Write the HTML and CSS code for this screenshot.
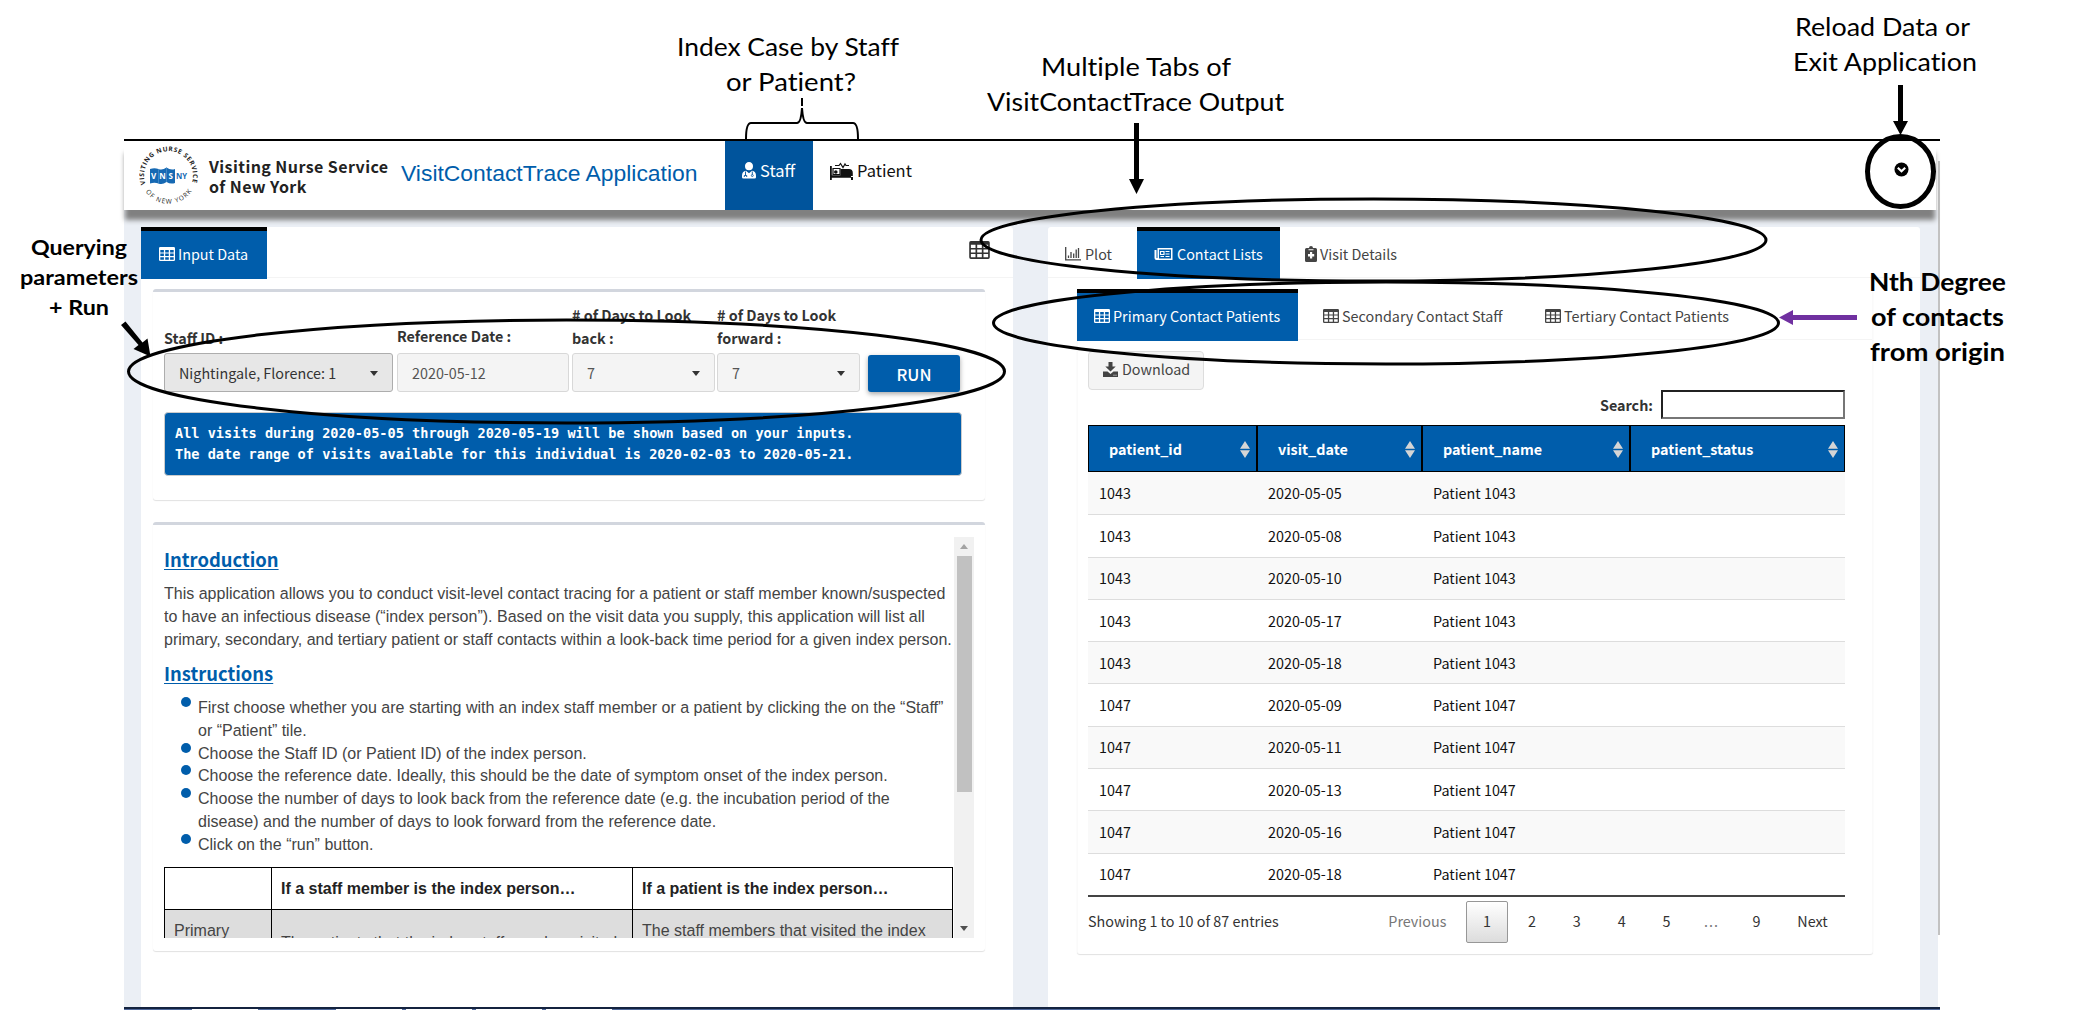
FILE: index.html
```html
<!DOCTYPE html>
<html lang="en">
<head>
<meta charset="utf-8">
<title>VisitContactTrace Application</title>
<link rel="stylesheet" href="styles.css">
</head>
<body>
<svg class="defs" width="0" height="0">
  <symbol id="table" viewBox="0 0 16 14"><path fill-rule="evenodd" fill="currentColor" d="M1.300 0h13.400q1.300 0 1.300 1.300v11.400q0 1.300-1.300 1.300h-13.400q-1.300 0-1.300-1.300v-11.400q0-1.300 1.300-1.300zM1.300 3v2.400h3.600v-2.400zM6.200 3v2.400h3.600v-2.400zM11.100 3v2.400h3.600v-2.400zM1.300 6.600v2.400h3.600v-2.400zM6.200 6.600v2.400h3.600v-2.400zM11.100 6.600v2.400h3.600v-2.400zM1.300 10.200v2.500h3.600v-2.500zM6.200 10.200v2.500h3.600v-2.500zM11.100 10.200v2.500h3.600v-2.500z"/></symbol>
</svg>
<div class="page">
  <div class="app">
    <header class="navbar">
      <svg class="logo" viewBox="0 0 60 60" width="60" height="60">
        <path id="ring" fill="none" d="M6.500 38.100A24.500 24.500 0 1 1 52.500 38.100"/>
        <path id="ringlow" fill="none" d="M4.500 42.300A28 28 0 0 0 54.500 42.300"/>
        <text class="ringtext"><textPath href="#ring" textLength="92">VISITING NURSE SERVICE</textPath></text>
        <text class="ringtext light"><textPath href="#ringlow" startOffset="4" textLength="54">OF NEW YORK</textPath></text>
        <path fill="#1669b3" d="M11 23q4.500-1.500 8.500 0q4 1.500 8-1.500q4 3 8.500 1.500v14q-4.500 1.500-8.500-1q-4 3-8 1.500q-4-1.500-8.500 0z"/>
        <path stroke="#5c9ad0" stroke-width=".6" fill="none" d="M19.500 23v14.500M27.500 21.500v14.500"/>
        <text class="logo-white" x="12" y="33" textLength="22">VNS</text>
        <text class="logo-blue" x="37" y="32.500" textLength="11" lengthAdjust="spacingAndGlyphs">NY</text>
      </svg>
      <div class="org">Visiting Nurse Service<br>of New York</div>
      <div class="title">VisitContactTrace Application</div>
      <nav class="menu">
        <a class="menu-item active"><svg width="14" height="17" viewBox="0 0 14 17"><path fill="currentColor" d="M7 0a4 4 0 0 1 4 4.200a4 4 0 0 1-8 0A4 4 0 0 1 7 0zM4 8.700l3 2.500 3-2.500q4 .7 4 5v1.500q0 1.300-1.500 1.300h-11Q0 16.500 0 15.200v-1.500q0-4.300 4-5z"/><path fill="none" stroke="#00549c" stroke-width=".9" d="M3.500 9.500v4M2.300 15v-1.500h2.400V15M10.300 9.500v3"/><circle cx="10.300" cy="13.500" r="1" fill="none" stroke="#00549c" stroke-width=".8"/></svg>Staff</a>
        <a class="menu-item"><svg width="23" height="18" viewBox="0 0 23 18"><path fill="currentColor" d="M0 4h1.800v9.200H21V15h2v3h-2v-2.200H1.800V18H0zM10.500 7h8.500q3.800 0 3.800 4v3H10.500z"/><circle cx="5.800" cy="10" r="1.800" fill="currentColor"/><path fill="none" stroke="currentColor" stroke-width="1.200" d="M5 3.500h4l1.500-2 2.500 4 2-3.500 1 1.500h3M3 6.500h7v6H3z"/></svg>Patient</a>
      </nav>
      <svg class="toggle" width="15" height="15" viewBox="0 0 15 15"><circle cx="7.500" cy="7.500" r="7"/><path fill="none" stroke="#fff" stroke-width="2.200" d="M3.800 5.800l3.700 3.500 3.700-3.500"/></svg>
    </header>

    <main class="columns">
      <section class="panel">
        <div class="tabs">
          <a class="tab active input-tab"><svg class="ico"><use href="#table"/></svg>Input Data</a>
          <svg class="ico-big"><use href="#table"/></svg>
        </div>
        <div class="box query">
          <div class="form">
            <div class="field staff"><label>Staff ID :</label><div class="control dark">Nightingale, Florence: 1<i class="caret"></i></div></div>
            <div class="field date"><label>Reference Date :</label><div class="control">2020-05-12</div></div>
            <div class="field days"><label># of Days to Look back :</label><div class="control">7<i class="caret"></i></div></div>
            <div class="field days"><label># of Days to Look forward :</label><div class="control">7<i class="caret"></i></div></div>
            <button class="run">RUN</button>
          </div>
          <pre class="notice">All visits during 2020-05-05 through 2020-05-19 will be shown based on your inputs.
The date range of visits available for this individual is 2020-02-03 to 2020-05-21.</pre>
        </div>
        <div class="box guide">
          <div class="scroller">
            <div class="copy">
              <h4>Introduction</h4>
              <p>This application allows you to conduct visit-level contact tracing for a patient or staff member known/suspected<br>to have an infectious disease (“index person”). Based on the visit data you supply, this application will list all<br>primary, secondary, and tertiary patient or staff contacts within a look-back time period for a given index person.</p>
              <h4>Instructions</h4>
              <ul>
                <li>First choose whether you are starting with an index staff member or a patient by clicking the on the “Staff”<br>or “Patient” tile.</li>
                <li>Choose the Staff ID (or Patient ID) of the index person.</li>
                <li>Choose the reference date. Ideally, this should be the date of symptom onset of the index person.</li>
                <li>Choose the number of days to look back from the reference date (e.g. the incubation period of the<br>disease) and the number of days to look forward from the reference date.</li>
                <li>Click on the “run” button.</li>
              </ul>
              <table class="matrix">
                <tr><th></th><th>If a staff member is the index person…</th><th>If a patient is the index person…</th></tr>
                <tr class="shade"><td>Primary<br>Contacts</td><td>The patients that the index staff member visited.</td><td>The staff members that visited the index<br>patient.</td></tr>
              </table>
            </div>
            <div class="bar"><i class="up"></i><i class="thumb"></i><i class="down"></i></div>
          </div>
        </div>
      </section>

      <section class="panel">
        <div class="tabs">
          <a class="tab plot"><svg class="ico" viewBox="0 0 16 14"><path fill="none" stroke="currentColor" stroke-width="1.300" d="M.7 0v12.800H16M3.500 11V8.500M6 11V5M8.700 11V6.500M11.200 11V2.500M13.500 11V1"/></svg>Plot</a>
          <a class="tab active lists"><svg class="ico wide" viewBox="0 0 18 14"><path fill-rule="evenodd" fill="currentColor" d="M3 1h15v12H2q-2 0-2-2V3h2v8h1zM4.500 2.500v9h12v-9z"/><path fill="none" stroke="currentColor" stroke-width="1.200" d="M6 4.500h3.500v3H6zM11 4.500h4M11 7h4M6 9.500h3.500M11 9.500h4"/></svg>Contact Lists</a>
          <a class="tab visits"><svg class="ico clip" viewBox="0 0 12 16"><path fill="currentColor" fill-rule="evenodd" d="M1.500 2H4a2 2 0 0 1 4 0h2.500q1.500 0 1.500 1.500v11q0 1.500-1.500 1.500h-9Q0 16 0 14.500v-11Q0 2 1.500 2zM5 6v2H3v2.400h2v2h2.200v-2h2V8h-2V6zM3.500 3.200v1h5v-1z"/></svg>Visit Details</a>
        </div>
        <div class="box results">
          <div class="tabs subtabs">
            <a class="tab active primary"><svg class="ico"><use href="#table"/></svg>Primary Contact Patients</a>
            <a class="tab secondary"><svg class="ico"><use href="#table"/></svg>Secondary Contact Staff</a>
            <a class="tab tertiary"><svg class="ico"><use href="#table"/></svg>Tertiary Contact Patients</a>
          </div>
          <div class="content">
            <button class="download"><svg width="15" height="15" viewBox="0 0 15 15"><path fill="currentColor" d="M5.500 0h4v4.500h3.200L7.500 9.500 2.300 4.500h3.200zM0 9.500h4.500l3 2.500 3-2.500H15V15H0z"/><path stroke="#f4f4f4" d="M10.500 13.200h1M12.500 13.200h1"/></svg>Download</button>
            <div class="search"><b>Search:</b><input type="text"></div>
            <table class="grid">
              <colgroup><col class="c1"><col class="c2"><col class="c3"><col class="c4"></colgroup>
              <thead><tr><th>patient_id<i></i></th><th>visit_date<i></i></th><th>patient_name<i></i></th><th>patient_status<i></i></th></tr></thead>
              <tbody>
                <tr><td>1043</td><td>2020-05-05</td><td>Patient 1043</td><td></td></tr>
                <tr><td>1043</td><td>2020-05-08</td><td>Patient 1043</td><td></td></tr>
                <tr><td>1043</td><td>2020-05-10</td><td>Patient 1043</td><td></td></tr>
                <tr><td>1043</td><td>2020-05-17</td><td>Patient 1043</td><td></td></tr>
                <tr><td>1043</td><td>2020-05-18</td><td>Patient 1043</td><td></td></tr>
                <tr><td>1047</td><td>2020-05-09</td><td>Patient 1047</td><td></td></tr>
                <tr><td>1047</td><td>2020-05-11</td><td>Patient 1047</td><td></td></tr>
                <tr><td>1047</td><td>2020-05-13</td><td>Patient 1047</td><td></td></tr>
                <tr><td>1047</td><td>2020-05-16</td><td>Patient 1047</td><td></td></tr>
                <tr><td>1047</td><td>2020-05-18</td><td>Patient 1047</td><td></td></tr>
              </tbody>
            </table>
            <div class="footer">
              <span class="info">Showing 1 to 10 of 87 entries</span>
              <span class="pages"><a class="prev">Previous</a><a class="current">1</a><a>2</a><a>3</a><a>4</a><a>5</a><a class="prev dots">...</a><a>9</a><a class="next">Next</a></span>
            </div>
          </div>
        </div>
      </section>
    </main>
    <div class="taskbar"><i></i><i></i><i></i><i></i><i></i></div>
  </div>

  <svg class="notes" width="2089" height="1010" viewBox="0 0 2089 1010">
    <g fill="none" stroke="#000" stroke-width="3">
      <ellipse cx="566.500" cy="371.500" rx="438" ry="51.500"/>
      <ellipse cx="1373.500" cy="240" rx="392.500" ry="41"/>
      <ellipse cx="1386" cy="323" rx="392.500" ry="41"/>
      <ellipse cx="1900.500" cy="171.500" rx="33" ry="35" stroke-width="5"/>
      <path stroke-width="2" d="M746 139q0-16 5-16h46q4 0 5-15q1 15 5 15h46q5 0 5 16M802 98v8M802 108v4"/>
    </g>
    <path d="M1134 123h5v56h5l-7.500 15-7.500-15h5zM1898 85h5v36h5l-7.500 14-7.500-14h5z"/>
    <path d="M121 325l4.500-3.500 17 21 5-4 3 18-17-7.500 5-4z"/>
    <path fill="#7030a0" d="M1857 315v5h-64v5l-14-7.500 14-7.500v5z"/>
    <g class="regular">
      <text x="677" y="56" textLength="222" lengthAdjust="spacingAndGlyphs">Index Case by Staff</text>
      <text x="726" y="91" textLength="130" lengthAdjust="spacingAndGlyphs">or Patient?</text>
      <text x="1041" y="76" textLength="190" lengthAdjust="spacingAndGlyphs">Multiple Tabs of</text>
      <text x="987" y="111" textLength="297" lengthAdjust="spacingAndGlyphs">VisitContactTrace Output</text>
      <text x="1795" y="36" textLength="175" lengthAdjust="spacingAndGlyphs">Reload Data or</text>
      <text x="1793" y="71" textLength="184" lengthAdjust="spacingAndGlyphs">Exit Application</text>
    </g>
    <g class="strong">
      <text x="1869" y="291" textLength="137" lengthAdjust="spacingAndGlyphs">Nth Degree</text>
      <text x="1871" y="326" textLength="133" lengthAdjust="spacingAndGlyphs">of contacts</text>
      <text x="1870" y="361" textLength="135" lengthAdjust="spacingAndGlyphs">from origin</text>
    </g>
    <g class="strong small">
      <text x="31" y="255" textLength="96" lengthAdjust="spacingAndGlyphs">Querying</text>
      <text x="20" y="285" textLength="118" lengthAdjust="spacingAndGlyphs">parameters</text>
      <text x="49" y="315" textLength="60" lengthAdjust="spacingAndGlyphs">+ Run</text>
    </g>
  </svg>
</div>
</body>
</html>
```
FILE: styles.css
```css
* { box-sizing: border-box; }
body { margin: 0; background: #fff; color: #333; font: 14.35px/20px "Noto Sans CJK SC", "Open Sans", sans-serif; }
.defs { position: absolute; }
.page { position: relative; width: 2089px; height: 1010px; overflow: hidden; padding: 139px 0 0 124px; }
.app { width: 1816px; height: 871px; border-top: 2px solid #000; display: flex; flex-direction: column; background: linear-gradient(#c2c2c2, #c2c2c2) right 0 top 20px / 2px 774px no-repeat; }

.navbar { position: relative; z-index: 1; width: 1812px; height: 69px; background: #fff; display: flex; box-shadow: 0 11px 5px -1px #808080; }
.logo { margin: 5px 0 0 15px; flex: none; }
.ringtext { font: bold 6.500px "Open Sans", sans-serif; fill: #222; }
.ringtext.light { font-weight: normal; font-size: 6.500px; }
.logo-white { font: bold 8px "Open Sans", sans-serif; fill: #fff; }
.logo-blue { font: bold 8px "Open Sans", sans-serif; fill: #1669b3; }
.org { width: 192px; margin: 15px 0 0 10px; flex: none; font-size: 16px; font-weight: 700; line-height: 20px; color: #222; letter-spacing: .42px; white-space: nowrap; }
.title { width: 324px; margin-top: 19px; flex: none; font: 22.9px/26px "Liberation Sans", Arial, sans-serif; color: #005dab; white-space: nowrap; }
.menu { display: flex; }
.menu-item { display: flex; height: 69px; padding: 17px 17px 0; gap: 4px; font-size: 16.500px; line-height: 24px; color: #111; white-space: nowrap; }
.menu-item svg { margin-top: 4px; flex: none; }
.menu-item.active { width: 88px; background: #00549c; color: #fff; }
.toggle { margin: 21px 27.500px 0 auto; }

.columns { display: flex; gap: 35px; width: 1814px; height: 865px; padding: 17px 19px 0 17px; background: #ebeff5; }
.panel { flex: none; width: 872px; height: 780px; background: #fff; border-radius: 3px 3px 0 0; }
.tabs { display: flex; height: 51px; border-bottom: 1px solid #f4f4f4; }
.tab { height: 52px; border-top: 4px solid transparent; padding: 13px 0 0 17px; line-height: 20px; white-space: nowrap; color: #444; display: flex; gap: 3px; }
.tab.active { background: #005dab; border-top-color: #000; color: #fff; }
.ico { width: 16px; height: 14px; margin-top: 3px; flex: none; }
.ico.wide { width: 19px; margin-right: 1px; }
.ico.clip { width: 12px; height: 16px; margin-top: 2px; }
.ico-big { width: 21px; height: 18px; margin: 14px 23px 0 auto; color: #333; }
.input-tab { width: 126px; padding-left: 18px; }
.plot { width: 89px; }
.plot .ico { margin-right: 1px; }
.lists { width: 143px; }
.visits { padding-left: 25px; }
.primary { width: 221px; letter-spacing: .04px; }
.secondary { width: 222px; padding-left: 25px; }
.tertiary { padding-left: 25px; }

.box { border-radius: 3px; border-top: 3px solid #d2d6de; box-shadow: 0 1px 1px rgba(0,0,0,.12); background: #fff; }
.query { width: 832px; height: 211px; margin: 11px 0 0 12px; padding: 12px 11px 0; }
.form { display: flex; align-items: flex-end; height: 88px; }
.field { display: flex; flex-direction: column; }
.field label { font-weight: 600; line-height: 23px; color: #333; margin-bottom: 4px; }
.field.staff { width: 229px; margin-right: 4px; }
.field.date { width: 172px; margin-right: 3px; }
.date label { margin-bottom: 6px; }
.field.days { width: 143px; margin-right: 2px; }
.days label { width: 130px; }
.control { height: 39px; border: 1px solid #d8d8d8; border-radius: 3px; background: #f4f4f4; color: #555; padding: 0 14px; line-height: 37px; display: flex; justify-content: space-between; }
.control.dark { background: #e7e7e7; border-color: #adadad; color: #333; }
.caret { width: 0; height: 0; margin-top: 17px; border: 4.500px solid transparent; border-top: 5px solid #333; }
.run { width: 92px; height: 37px; margin-left: 6px; border: 0; border-radius: 3px; background: #005dab; color: #fff; font: 500 16.500px/36px "Noto Sans CJK SC", sans-serif; box-shadow: 0 2px 5px rgba(0,0,0,.35); padding: 0; }
.notice { margin: 20px 0 0; width: 798px; height: 64px; padding: 10px 10px; background: #005dab; border: 1px solid #ccc; border-radius: 4px; color: #fff; font: bold 13.580px/21px "DejaVu Sans Mono", monospace; }
.guide { width: 832px; height: 429px; margin: 22px 0 0 12px; padding: 12px 11px; }
.scroller { height: 401px; overflow: hidden; display: flex; }
.copy { width: 790px; flex: none; font: 16.030px/22.900px "Liberation Sans", Arial, sans-serif; color: #444; }
.copy h4 { margin: 11px 0 11px; font: 700 18.400px/23px "Noto Sans CJK SC", sans-serif; color: #005dab; text-decoration: underline; text-decoration-thickness: 1px; text-underline-offset: 2px; }
.copy p { margin: 0; white-space: nowrap; }
.copy ul { list-style: none; margin: 0 0 11px; padding: 0 0 0 34px; }
.copy li { position: relative; white-space: nowrap; }
.copy li::before { content: ""; position: absolute; left: -17px; top: 1px; width: 10px; height: 10px; border-radius: 50%; background: #005dab; }
.matrix { width: 789px; table-layout: fixed; border-collapse: collapse; }
.matrix th, .matrix td { border: 1px solid #000; padding: 9px; text-align: left; white-space: nowrap; }
.matrix th { height: 42px; color: #222; }
.matrix th:nth-child(1) { width: 107px; }
.matrix th:nth-child(2) { width: 361px; }
.shade { background: #ddd; }
.bar { width: 20px; background: #f1f1f1; display: flex; flex-direction: column; align-items: center; }
.up, .down { width: 0; height: 0; border: 4.500px solid transparent; }
.up { margin-top: 3px; border-bottom: 5px solid #a3a3a3; }
.thumb { width: 15px; height: 236px; margin: 7px 0 auto; background: #c1c1c1; }
.down { margin-bottom: 3px; border-top: 5px solid #505050; }

.results { width: 796px; height: 665px; margin: 11px 0 0 29px; border-top: 0; border-right: 1px solid #fafafa; border-left: 1px solid #fafafa; }
.results .subtabs { margin-left: -1px; }
.content { padding: 11px 0 0 10px; width: 767px; }
.download { display: flex; gap: 4px; width: 116px; height: 39px; padding: 8px 14px; border: 1px solid #ddd; border-radius: 4px; background: #f4f4f4; color: #444; font: 14.350px/18px "Noto Sans CJK SC", sans-serif; }
.download svg { flex: none; margin-top: 2px; }
.search { display: flex; justify-content: flex-end; align-items: center; gap: 8px; height: 29px; margin-bottom: 6px; }
.search input { width: 184px; height: 29px; border: 2px inset #767676; padding: 0; }
.grid { width: 757px; table-layout: fixed; border-collapse: separate; border-spacing: 0; color: #111; border-bottom: 2px solid #444; }
.c1 { width: 169px; } .c2 { width: 165px; } .c3 { width: 208px; } .c4 { width: 215px; }
.grid th { position: relative; height: 47px; padding: 0 0 0 20px; text-align: left; background: #005dab; color: #fff; border: 1px solid #000; font-weight: 700; }
.grid th i { position: absolute; right: 6px; top: 15px; width: 10px; height: 17px; background: #d5d5d5; clip-path: polygon(50% 0, 100% 45%, 0 45%, 0 55%, 100% 55%, 50% 100%, 0 55%, 0 45%); }
.grid td { height: 42.300px; padding: 0 11px; border-top: 1px solid #ddd; }
.grid tr:first-child td { border-top: 0; }
.grid tbody tr:nth-child(odd) { background: #f9f9f9; }
.footer { display: flex; justify-content: space-between; padding-top: 4px; line-height: 40px; height: 46px; white-space: nowrap; }
.pages { display: flex; gap: 2.400px; }
.pages a { width: 42.500px; text-align: center; height: 42px; color: #333; }
.pages .prev { color: #777; }
.pages .dots { letter-spacing: 1px; }
.pages a:first-child { width: 92px; }
.pages .next { width: 65px; }
.pages .current { border: 1px solid #979797; border-radius: 2px; background: linear-gradient(#fff, #dcdcdc); line-height: 38px; }
.taskbar { width: 1816px; height: 3px; flex: none; background: #50689a; border-top: 2px solid #14233f; display: flex; gap: 4px; padding-left: 68px; }
.taskbar i { width: 66px; height: 1px; background: #fff; }
.taskbar i:nth-child(1) { margin-right: 74px; }

.notes { position: absolute; left: 0; top: 0; z-index: 2; font-variant-ligatures: none; }
.regular { font: 25px Lato, sans-serif; font-variant-ligatures: none; }
.strong { font: bold 25px Lato, sans-serif; font-variant-ligatures: none; }
.small { font-size: 21.500px; }
```
